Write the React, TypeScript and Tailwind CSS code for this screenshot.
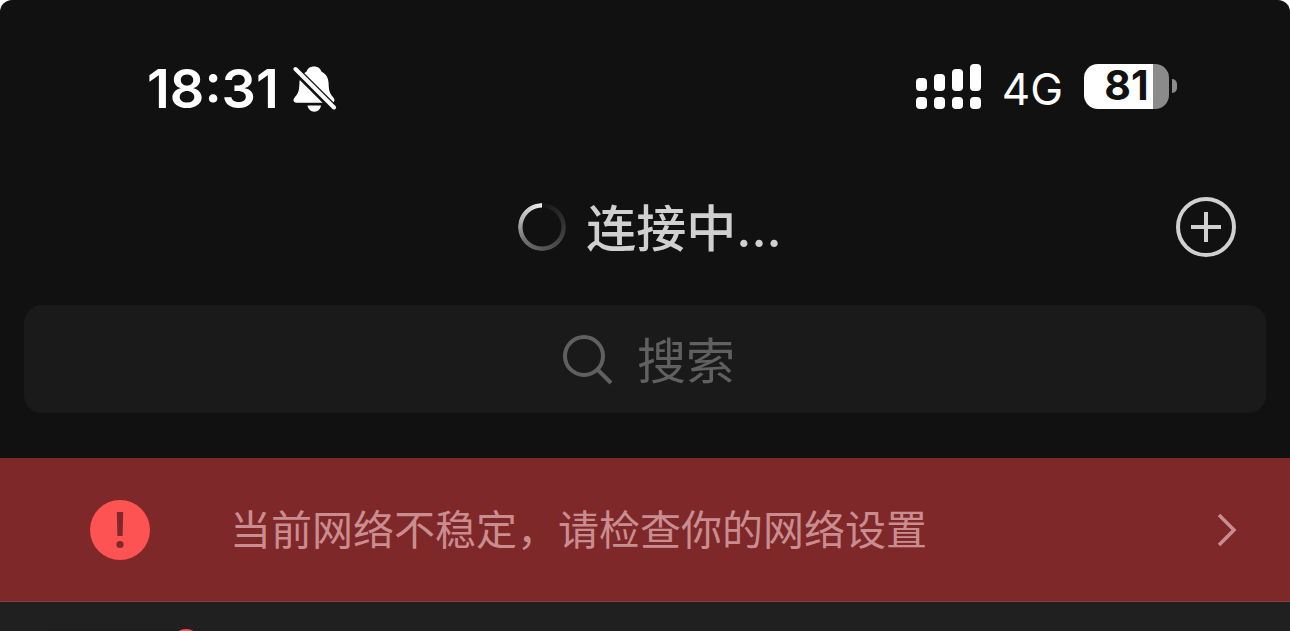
const signalBars = ["h-[13px]", "h-[17px]", "h-[22px]", "h-[27px]"];

function BellOffIcon() {
  return (
    <svg viewBox="0 0 44 46" className="w-11 h-[46px]" aria-label="静音">
      <mask id="bell-cut">
        <rect width="44" height="46" fill="white" />
        <path d="M-2 -0.5 L46 47.5" stroke="black" strokeWidth="8" />
      </mask>
      <g fill="white" mask="url(#bell-cut)">
        <path d="M21 0.5c-4.200 0-6.600 2.200-7.600 5.300C8.800 8 6.600 12 6.400 17.500c-.2 7.500-1.400 10-4.400 13.500-2.600 3-1.600 5.800 1.500 5.800h35c3.100 0 4.100-2.800 1.500-5.800-3-3.500-4.200-6-4.400-13.500-.2-5.500-2.400-9.500-7-11.700C27.600 2.700 25.200 0.500 21 0.500z" />
      </g>
      <path d="M14.500 39.500h13.500c-.5 3.700-3.300 6.200-6.700 6.200s-6.300-2.500-6.800-6.200z" fill="white" />
      <path d="M2.500 3 L41 41.500" stroke="white" strokeWidth="4" strokeLinecap="round" />
    </svg>
  );
}

function StatusBar() {
  return (
    <div className="flex items-center justify-between pl-[147px] pr-[113px] pt-[47px] text-white">
      <div className="flex items-center gap-[14px] pt-[6px]">
        <span className="text-[54px] leading-[72px] font-semibold">18:31</span>
        <BellOffIcon />
      </div>
      <div className="flex items-center">
        <div className="flex flex-col gap-[6px]">
          <div className="flex items-end gap-[7px]">
            {signalBars.map((height) => (
              <div key={height} className={`w-[11px] rounded-[4px] bg-white ${height}`} />
            ))}
          </div>
          <div className="flex gap-[7px]">
            {signalBars.map((height) => (
              <div key={height} className="w-[11px] h-3 rounded-[4px] bg-white" />
            ))}
          </div>
        </div>
        <span className="ml-[21px] pt-[6px] text-[44px] leading-[72px]">4G</span>
        <div className="ml-[21px] flex h-[45px] w-[85px] items-center justify-center rounded-[14px] bg-[linear-gradient(to_right,white_81%,#8b8b8b_81%)] text-[41px] font-bold text-[#111111]">
          81
        </div>
        <div className="ml-[3px] h-[14px] w-[5px] rounded-r-full bg-[#8b8b8b]" />
      </div>
    </div>
  );
}

function TitleBar() {
  return (
    <div className="grid grid-cols-[1fr_auto_1fr] items-center px-[54px] pt-[66px]">
      <div />
      <div className="flex items-center gap-5 pl-[10px]">
        <div className="size-12 rounded-full bg-[conic-gradient(#161616,#505050_45%,#707070_65%,#b0b0b0_80%,#f0f0f0)] mask-[radial-gradient(closest-side,transparent_79%,black_83%)]" />
        <h1 className="pt-1 text-[50px] leading-[68px] font-medium text-[#d0d0d0]">连接中...</h1>
      </div>
      <button type="button" aria-label="添加" className="justify-self-end">
        <svg viewBox="0 0 60 60" className="size-[60px]" fill="none" stroke="#d0d0d0">
          <circle cx="30" cy="30" r="28" strokeWidth="4" />
          <path d="M30 15v30M15 30h30" strokeWidth="4" />
        </svg>
      </button>
    </div>
  );
}

function SearchBox() {
  return (
    <div className="px-6 pt-[42px]">
      <label className="flex h-[108px] items-center justify-center gap-6 rounded-[18px] bg-[#1a1a1a] pt-[2px] pl-[10px]">
        <svg viewBox="0 0 50 50" className="size-[50px]" fill="none" stroke="#606060" strokeWidth="4">
          <circle cx="21" cy="21" r="19" />
          <path d="M34 34l14 14" />
        </svg>
        <input
          type="text"
          aria-label="搜索"
          placeholder="搜索"
          className="w-[100px] pt-1 text-[49px] leading-[72px] text-[#d0d0d0] outline-none placeholder:text-[#606060]"
        />
      </label>
    </div>
  );
}

function NetworkBanner() {
  return (
    <a href="#network" className="mt-[45px] flex h-36 items-center border-b border-[#7a4346] bg-[#7e282a] pl-[90px] pr-[53px] text-[#c98d8f]">
      <svg viewBox="0 0 60 60" className="size-[60px] shrink-0">
        <circle cx="30" cy="30" r="30" fill="#fd5352" />
        <path d="M26.800 12h6.400l-.6 24h-5.200z" fill="#7e282a" />
        <circle cx="30" cy="44.500" r="3.600" fill="#7e282a" />
      </svg>
      <span className="ml-20 flex-1 text-[41px] leading-[60px]">当前网络不稳定，请检查你的网络设置</span>
      <svg viewBox="0 0 20 34" className="h-[34px] w-5" fill="none" stroke="currentColor" strokeWidth="3.500">
        <path d="M2 2l15 15L2 32" />
      </svg>
    </a>
  );
}

export default function App() {
  return (
    <div className="h-screen overflow-hidden bg-white font-['Inter','Noto_Sans_CJK_SC',sans-serif]">
      <div className="min-h-full rounded-t-[12px] bg-[#111111]">
        <StatusBar />
        <TitleBar />
        <SearchBox />
        <NetworkBanner />
        <div className="bg-[#202020] px-12 pt-7">
          <div className="relative h-36 w-36 bg-[#181818]">
            <span className="absolute -top-px right-[-9px] size-[30px] rounded-full bg-[#fd5352]" />
          </div>
        </div>
      </div>
    </div>
  );
}
